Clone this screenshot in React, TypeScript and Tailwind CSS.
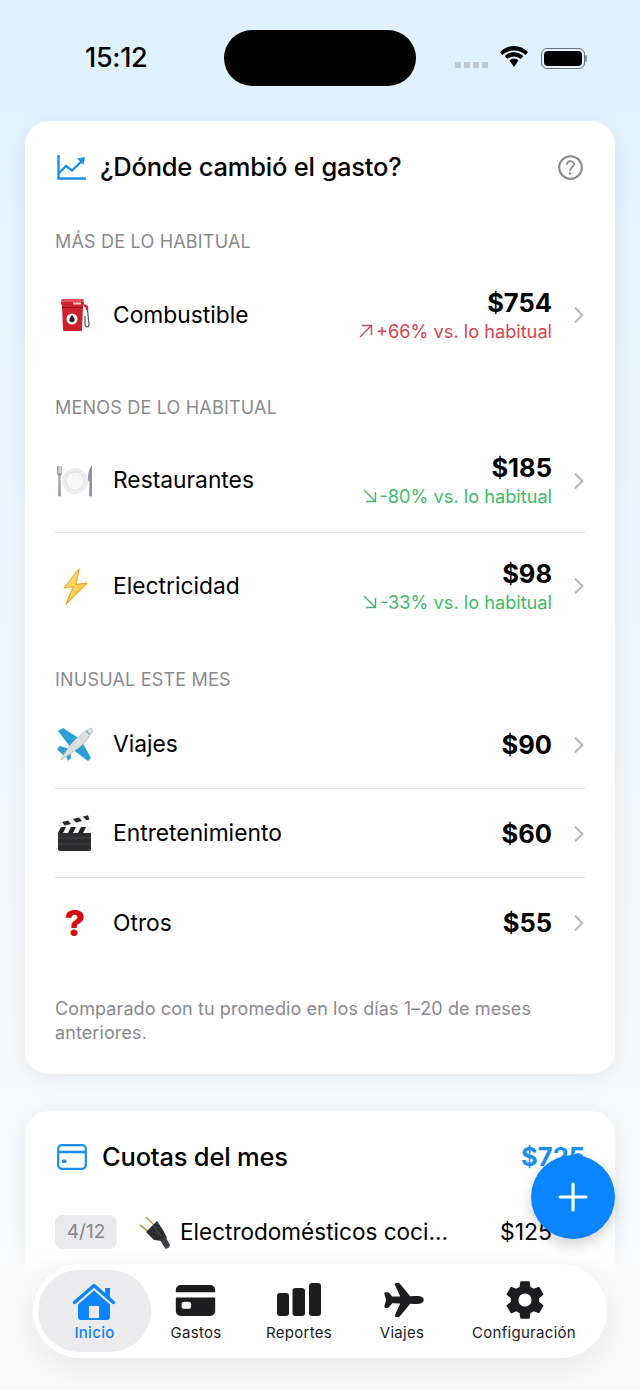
import React from 'react';
import {
  IoCard,
  IoAirplane,
  IoSettingsSharp,
  IoChevronForward,
  IoHelpCircleOutline,
} from 'react-icons/io5';

const FuelEmoji = () => (
  <svg width="40" height="40" viewBox="0 0 40 40">
    <path d="M7 4h21l1 5-1 2-1 24q0 1-1 1H9q-1 0-1-1L7 11 6 8z" fill="#cf1f2b" />
    <rect x="6.500" y="4" width="22" height="3" rx="1" fill="#e4505a" />
    <rect x="7" y="12" width="21" height="1" fill="#8e0f18" />
    <rect x="18" y="7.500" width="8" height="2" fill="#f6c9cc" />
    <circle cx="17" cy="24" r="5.500" fill="#fff" />
    <path d="M17 20q3 3.500 2.600 5.200a2.700 2.700 0 0 1-5.200 0Q14 23.500 17 20z" fill="#222" />
    <path d="M29 10l3 2v3" fill="none" stroke="#c62530" strokeWidth="2.400" />
    <path d="M32.500 15l1.500 14q0 3-2 3t-2-3v-8" fill="none" stroke="#555" strokeWidth="1.200" />
  </svg>
);

const PlateEmoji = () => (
  <svg width="40" height="40" viewBox="0 0 40 40">
    <circle cx="20" cy="20" r="13" fill="#ececee" />
    <circle cx="20" cy="20" r="9" fill="#f8f8f8" stroke="#dcdcde" strokeWidth="0.800" />
    <path d="M2 5v7q0 3 1.500 3.500L3 34q0 1.500 1.500 1.500T6 34l-.5-18.500Q7 15 7 12V5h-.8v7h-.8V5h-.9v7h-.8V5h-.8v7H3V5z" fill="#9aa2b0" />
    <path d="M37 4q-4 4-4 14 0 2 1.500 3L34 34q0 1.500 1.500 1.500T37 34z" fill="#8e96a2" />
  </svg>
);

const BoltEmoji = () => (
  <svg width="40" height="40" viewBox="0 0 40 40">
    <defs>
      <linearGradient id="bolt" x1="0" y1="0" x2="1" y2="1">
        <stop offset="0" stopColor="#ffe88f" />
        <stop offset="1" stopColor="#fbc02d" />
      </linearGradient>
    </defs>
    <path d="M24 3L9 22l9.500-1.500L11 38l21-21-11 1.500z" fill="url(#bolt)" stroke="#efa41a" strokeWidth="1.100" strokeLinejoin="round" />
  </svg>
);

const PlaneEmoji = () => (
  <svg width="40" height="40" viewBox="0 0 40 40">
    <path d="M3 6l5-3 17 11-9 9z" fill="#2b9fd8" />
    <path d="M36 33l-3 3-16-12 9-9z" fill="#2b9fd8" />
    <path d="M2 24l3-3 9 3-5 7z" fill="#2b9fd8" />
    <path d="M10 28l5-4 1 9-3 3z" fill="#2b9fd8" />
    <path d="M36 3q2.500 1 1 4-4 8-12 15L9 33l-3 2 1-3 9-13Q27 7 36 3z" fill="#dcdee0" stroke="#a9adb1" strokeWidth="0.600" />
    <path d="M31 5.500l3.500 4" stroke="#8fa7b5" strokeWidth="1.200" />
  </svg>
);

const ClapperEmoji = () => (
  <svg width="40" height="40" viewBox="0 0 40 40">
    <rect x="3" y="17" width="33" height="20" rx="2" fill="#2c2c2e" />
    <path d="M3 13h33v6H3z" fill="#f2f2f2" />
    <path d="M6 13h5l-3 6H3zM16 13h5l-3 6h-5zM26 13h5l-3 6h-5z" fill="#222" />
    <path d="M2 9L33 1l1.500 5L4 14z" fill="#f0f0f0" />
    <path d="M7 8l6-1.600 3 3.600-6 1.600zM18 5l6-1.600 3 3.600-6 1.600zM28 2.500l5-1.300 1.500 4.300-3 .800z" fill="#2a2a2a" />
    <path d="M3 24h33M3 30h33" stroke="#4a4a4c" strokeWidth="0.700" />
  </svg>
);

const PlugEmoji = () => (
  <svg width="36" height="36" viewBox="0 0 36 36">
    <path d="M4 11l9 7M10 3l8 8" stroke="#b6a24a" strokeWidth="1.600" />
    <path d="M21 7l6 9 4 8-5 3-8-1-8-8z" fill="#2b2c2f" />
    <path d="M24 26l5-4 5 9-1.500 3-3 1z" fill="#3c3d41" />
    <path d="M17 11l8 11" stroke="#55565b" strokeWidth="1" />
  </svg>
);

const ChartIcon = () => (
  <svg width="30" height="26" viewBox="0 0 30 26" fill="none">
    <path d="M1.500 1v23.500H29" stroke="#1a8ff0" strokeWidth="2.400" />
    <path d="M2 19l7-7 6 4.500L25 7" stroke="#1a8ff0" strokeWidth="2.400" />
    <path d="M20 4.500L28 3l-1.500 8z" fill="#1a8ff0" />
  </svg>
);

const CardOutlineIcon = () => (
  <svg width="30" height="26" viewBox="0 0 30 26" fill="none">
    <rect x="1.200" y="1.200" width="27.600" height="23.600" rx="3.500" stroke="#1a8ff0" strokeWidth="2.200" />
    <path d="M1.500 8h27" stroke="#1a8ff0" strokeWidth="2.600" />
    <rect x="5" y="15.500" width="4.500" height="3.500" rx="1" fill="#1a8ff0" />
  </svg>
);

const BarsIcon = () => (
  <svg width="46" height="34" viewBox="0 0 46 34" fill="currentColor">
    <rect x="1" y="10" width="12" height="23" rx="3" />
    <rect x="16.500" y="5" width="12.500" height="28" rx="3" />
    <rect x="33" y="0" width="12" height="33" rx="3" />
  </svg>
);

const HomeIcon = () => (
  <svg width="44" height="40" viewBox="0 0 44 40" fill="currentColor">
    <path d="M2.500 20.500L22 3.500l19.500 17" fill="none" stroke="currentColor" strokeWidth="3.400" strokeLinecap="round" strokeLinejoin="round" />
    <rect x="33" y="6" width="5" height="10" />
    <path
      fillRule="evenodd"
      d="M22 8.500L6 22.500V35q0 3 3 3h26q3 0 3-3V22.500zM17 24h10v12H17z"
    />
  </svg>
);

const WifiIcon = () => (
  <svg width="28" height="22" viewBox="0 0 28 22">
    <path d="M14 4.500q7 0 11.500 4.500L28 6Q22 0 14 0T0 6l2.500 3Q7 4.500 14 4.500z" fill="#000" />
    <path d="M14 10.500q3.800 0 6.800 2.500l2.500-3Q19 6.200 14 6.200T4.700 10l2.500 3q3-2.500 6.800-2.500z" fill="#000" />
    <path d="M14 12.500q-2.500 0-4.600 1.700L14 21l4.600-6.800q-2.100-1.700-4.600-1.700z" fill="#000" />
  </svg>
);

const TrendArrow = ({ dir }: { dir: 'up' | 'down' }) => (
  <svg width="14" height="14" viewBox="0 0 14 14" fill="none" stroke="currentColor" strokeWidth="1.400">
    {dir === 'up' ? <path d="M1 13L12.500 1.500M3 1.500h9.500V11" /> : <path d="M1 1l11.500 11.500M12.500 3v9.500H3" />}
  </svg>
);

const StatusBar = () => (
  <div className="flex items-center h-[56px] mt-[30px] mb-[35px]">
    <div className="w-[224px] pl-[85px] text-[27px] font-medium text-black tracking-[-0.3px]">15:12</div>
    <div className="w-[192px] h-[56px] rounded-[28px] bg-black" />
    <div className="flex items-center pl-[39px]">
      <div className="flex gap-[3px] mt-[14px]">
        {[0, 1, 2, 3].map((i) => (
          <span key={i} className="w-[6px] h-[6px] rounded-[1px] bg-[#bcc7cf]" />
        ))}
      </div>
      <div className="ml-[12px] mb-[2px]">
        <WifiIcon />
      </div>
      <div className="ml-[13px] flex items-center">
        <div className="w-[44px] h-[21px] rounded-[6px] border border-[#6d7276] p-[2px]">
          <div className="w-full h-full rounded-[4px] bg-black" />
        </div>
        <span className="w-[2px] h-[7px] bg-[#8a8f93] rounded-r-sm" />
      </div>
    </div>
  </div>
);

type Row = {
  name: string;
  icon: React.ReactNode;
  amount: string;
  trend?: 'up' | 'down';
  note?: string;
};

const Label = ({ children }: { children: React.ReactNode }) => (
  <div className="h-[24px] leading-[24px] text-[18px] tracking-[0.2px] text-[#8a8a8e] mb-[8px]">{children}</div>
);

const RowItem = ({ row, last }: { row: Row; last?: boolean }) => (
  <div className={`flex items-center pt-[1px] ${row.note ? 'h-[105px]' : 'h-[89px]'} ${last ? '' : 'border-b border-[#e3e3e6]'}`}>
    <div className="w-[40px] h-[40px] flex items-center justify-center shrink-0">{row.icon}</div>
    <div className="ml-[18px] text-[22.8px] text-black flex-1">{row.name}</div>
    <div className="flex flex-col items-end">
      <div className="text-[25.5px] font-bold text-black leading-[30px]">{row.amount}</div>
      {row.note && (
        <div className={`flex items-center mt-[1px] text-[18.2px] leading-[24px] ${row.trend === 'up' ? 'text-[#d9434e]' : 'text-[#3dbb67]'}`}>
          <TrendArrow dir={row.trend === 'up' ? 'up' : 'down'} />
          <span className="ml-[3px]">{row.note}</span>
        </div>
      )}
    </div>
    <IoChevronForward className="ml-[15px] -mr-[6px] text-[#b9b9bd]" size={24} />
  </div>
);

const navItems = [
  { label: 'Gastos', icon: <IoCard size={45} className="-ml-[1px]" />, width: 'w-[90px]' },
  { label: 'Reportes', icon: <BarsIcon />, width: 'w-[116px]' },
  { label: 'Viajes', icon: <IoAirplane size={42} className="ml-[4px]" />, width: 'w-[90px]' },
  { label: 'Configuración', icon: <IoSettingsSharp size={42} className="ml-[1px]" />, width: 'w-[154px]' },
];

export default function App() {
  return (
    <div className="relative w-[640px] h-[1390px] overflow-hidden bg-gradient-to-b from-[#dff1fe] via-[#eef7fe] via-50% to-[#fbfcfd] font-['Inter',sans-serif]">
      <StatusBar />

      {/* Main card */}
      <div className="mx-[25px] bg-white rounded-[24px] shadow-[0_4px_20px_rgba(0,0,0,0.06)] px-[30px] pt-[23px] pb-[29px]">
        <div className="flex items-center h-[46px] mb-[40px]">
          <div className="ml-[2px]">
            <ChartIcon />
          </div>
          <h2 className="ml-[13px] text-[25.5px] font-medium text-black flex-1 tracking-[-0.2px]">¿Dónde cambió el gasto?</h2>
          <IoHelpCircleOutline size={33} className="-mr-[2px] text-[#8a8a8e]" />
        </div>

        <Label>MÁS DE LO HABITUAL</Label>
        <RowItem
          last
          row={{ name: 'Combustible', icon: <FuelEmoji />, amount: '$754', trend: 'up', note: '+66% vs. lo habitual' }}
        />

        <div className="mt-[29px]">
          <Label>MENOS DE LO HABITUAL</Label>
          <RowItem row={{ name: 'Restaurantes', icon: <PlateEmoji />, amount: '$185', trend: 'down', note: '-80% vs. lo habitual' }} />
          <RowItem
            last
            row={{ name: 'Electricidad', icon: <BoltEmoji />, amount: '$98', trend: 'down', note: '-33% vs. lo habitual' }}
          />
        </div>

        <div className="mt-[30px]">
          <Label>INUSUAL ESTE MES</Label>
          <RowItem row={{ name: 'Viajes', icon: <PlaneEmoji />, amount: '$90' }} />
          <RowItem row={{ name: 'Entretenimiento', icon: <ClapperEmoji />, amount: '$60' }} />
          <RowItem
            last
            row={{
              name: 'Otros',
              icon: <span className="text-[36px] font-extrabold text-[#d80b0b] leading-none">?</span>,
              amount: '$55',
            }}
          />
        </div>

        <p className="mt-[30px] text-[18px] leading-[24px] tracking-[0.1px] text-[#8a8a8e]">
          Comparado con tu promedio en los días 1–20 de meses anteriores.
        </p>
      </div>

      {/* Installments card */}
      <div className="mx-[25px] mt-[37px] bg-white rounded-[24px] shadow-[0_4px_20px_rgba(0,0,0,0.06)] px-[30px] pt-[23px] h-[300px]">
        <div className="flex items-center h-[46px]">
          <div className="ml-[2px]">
            <CardOutlineIcon />
          </div>
          <h2 className="ml-[15px] text-[25.5px] font-medium text-black flex-1 tracking-[-0.2px]">Cuotas del mes</h2>
          <span className="text-[25.5px] font-bold text-[#1a8ff0]">$725</span>
        </div>
        <div className="flex items-center mt-[34px] pr-[33px]">
          <span className="w-[62px] h-[34px] rounded-[8px] bg-[#e9e9ee] flex items-center justify-center text-[19px] text-[#85858b]">4/12</span>
          <div className="ml-[19px]">
            <PlugEmoji />
          </div>
          <span className="ml-[8px] text-[22.55px] text-black flex-1">Electrodomésticos coci...</span>
          <span className="text-[23px] text-black">$125</span>
        </div>
      </div>

      {/* Fade behind tab bar */}
      <div className="absolute left-0 right-0 bottom-0 h-[145px] bg-gradient-to-b from-white/0 via-[#fafafb] via-20% to-[#fafafb]" />

      {/* Floating add button */}
      <button className="absolute left-[531px] top-[1155px] w-[84px] h-[84px] rounded-full bg-[#0a84ff] shadow-[0_6px_14px_rgba(0,0,0,0.18)] flex items-center justify-center">
        <svg width="30" height="30" viewBox="0 0 30 30">
          <path d="M15 2v26M2 15h26" stroke="#fff" strokeWidth="3.200" strokeLinecap="round" />
        </svg>
      </button>

      {/* Tab bar */}
      <nav className="absolute left-[33px] top-[1264px] w-[574px] h-[94px] rounded-[47px] bg-white shadow-[0_10px_30px_rgba(0,0,0,0.07)] flex items-center pl-[5px]">
        <div className="w-[113px] h-[82px] pt-[7px] rounded-[41px] bg-[#ececee] flex flex-col items-center text-[#0a84ff]">
          <div className="h-[46px] flex items-center justify-center pt-[3px] -ml-[1px]">
            <HomeIcon />
          </div>
          <span className="text-[15px] font-medium tracking-[0.3px] leading-[20px]">Inicio</span>
        </div>
        {navItems.map((item) => (
          <div key={item.label} className={`${item.width} h-[82px] pt-[7px] flex flex-col items-center text-[#1c1c1e]`}>
            <div className="h-[46px] flex items-center justify-center">{item.icon}</div>
            <span className="text-[15px] tracking-[0.3px] leading-[20px] whitespace-nowrap">{item.label}</span>
          </div>
        ))}
      </nav>
    </div>
  );
}
